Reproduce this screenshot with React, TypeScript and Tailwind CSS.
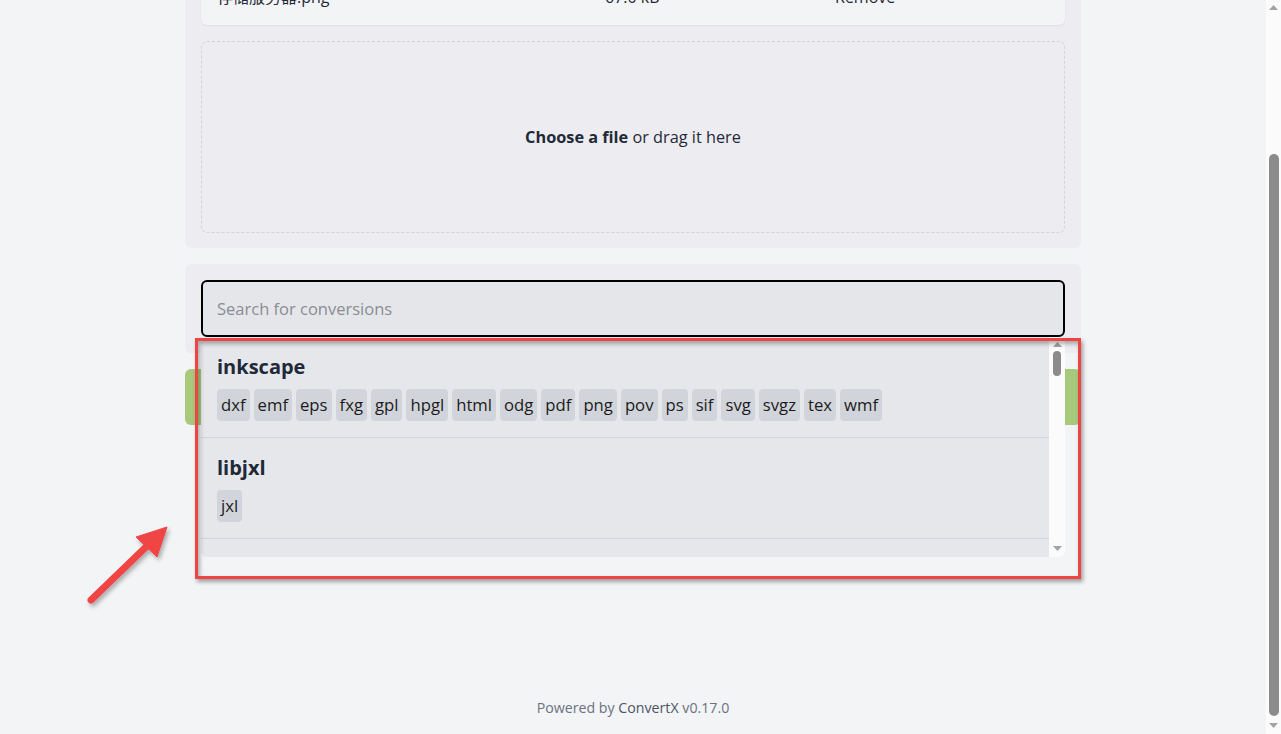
import React from 'react';

const converters = [
  {
    name: 'inkscape',
    targets: ['dxf', 'emf', 'eps', 'fxg', 'gpl', 'hpgl', 'html', 'odg', 'pdf', 'png', 'pov', 'ps', 'sif', 'svg', 'svgz', 'tex', 'wmf'],
  },
  { name: 'libjxl', targets: ['jxl'] },
  { name: 'libheif', targets: ['avif', 'heic', 'heif', 'jpg', 'png'] },
];

const FakeScrollbar: React.FC<{ className?: string; thumbClassName: string }> = ({ className, thumbClassName }) => (
  <div className={`flex flex-col items-center bg-[#fbfbfb] ${className ?? ''}`}>
    <svg width="9" height="5" viewBox="0 0 9 5" className="mt-[5px] shrink-0">
      <polygon points="0,5 4.5,0 9,5" fill="#a3a3a3" />
    </svg>
    <div className={`w-[8px] rounded-full bg-[#8b8b8b] ${thumbClassName}`} />
    <div className="flex-1" />
    <svg width="9" height="5" viewBox="0 0 9 5" className="mb-[6px] shrink-0">
      <polygon points="0,0 9,0 4.5,5" fill="#a3a3a3" />
    </svg>
  </div>
);

export default function App() {
  return (
    <div className="relative flex h-screen overflow-hidden bg-[#f3f4f6] font-['Open_Sans','Noto_Sans_CJK_SC',sans-serif] text-[#1f2937]">
      <div className="flex min-w-0 flex-1 flex-col">
        <main className="flex-1">
          <div className="mx-auto flex max-w-4xl flex-col gap-4">
            {/* upload card, scrolled partly out of view */}
            <section className="-mt-[47px] rounded-md bg-[#ededf1] px-4 pt-4 pb-[15px]">
              <div className="grid h-14 grid-cols-[388px_230px_1fr] items-center rounded-b-md bg-[#f3f4f6] pl-4 text-base shadow-[0_1px_2px_rgba(0,0,0,0.06)]">
                <span>存储服务器.png</span>
                <span>67.0 kB</span>
                <span>Remove</span>
              </div>
              <div className="mt-4 flex h-48 items-center justify-center rounded-md border border-dashed border-[#d4d4d8] text-[16.3px]">
                <span>
                  <b className="font-bold">Choose a file</b> or drag it here
                </span>
              </div>
            </section>

            {/* conversion picker */}
            <section className="rounded-md bg-[#ededf1] p-4">
              <div className="relative">
                <input
                  autoFocus
                  placeholder="Search for conversions"
                  className="h-[57px] w-full rounded-md border-2 border-black bg-[#e5e6ea] px-[14px] text-[16.5px] outline-none placeholder:text-[#8a8d93]"
                />
                <div className="absolute top-full left-0 z-10 flex h-[220px] w-full overflow-hidden rounded-md">
                  <div className="flex-1 overflow-hidden bg-[#e5e7eb]">
                    {converters.map(c => (
                      <div key={c.name} className="border-b border-[#d1d5db] p-4">
                        <h3 className="mb-2 text-xl leading-7 font-bold">{c.name}</h3>
                        <div className="flex flex-wrap gap-1">
                          {c.targets.map(t => (
                            <span key={t} className="rounded-[4px] bg-[#d1d5db] px-1 py-1 text-[16.7px] leading-6 text-[#1c1b1a]">
                              {t}
                            </span>
                          ))}
                        </div>
                      </div>
                    ))}
                  </div>
                  <FakeScrollbar className="w-4" thumbClassName="mt-[4px] h-[25px]" />
                </div>
              </div>
            </section>

            <button className="h-14 w-full rounded-md bg-[#a6c97c] text-lg font-semibold text-[#1f2937]">
              Convert
            </button>
          </div>
        </main>

        <footer className="p-4 text-center text-[14.2px] leading-5 text-[#6b7280]">
          Powered by <span className="text-[#4b5563]">ConvertX</span> v0.17.0
        </footer>
      </div>

      {/* window scrollbar */}
      <FakeScrollbar className="w-[15px] shrink-0" thumbClassName="mt-[144px] h-[562px] w-[10px]" />

      {/* annotation overlay */}
      <div className="pointer-events-none absolute top-[338px] left-[195px] z-20 h-[241px] w-[886px] border-[3px] border-[#ef4444] shadow-[2px_3px_4px_rgba(0,0,0,0.35),inset_2px_3px_4px_rgba(0,0,0,0.3)]" />
      <svg
        className="pointer-events-none absolute top-[520px] left-[80px] z-20"
        width="100"
        height="95"
        viewBox="80 520 100 95"
      >
        <defs>
          <filter id="sh" x="-20%" y="-20%" width="140%" height="140%">
            <feDropShadow dx="2" dy="3" stdDeviation="2" floodColor="#000" floodOpacity="0.3" />
          </filter>
        </defs>
        <g filter="url(#sh)" fill="#ef4444" stroke="#ef4444">
          <line x1="91" y1="600" x2="147" y2="546" strokeWidth="7" strokeLinecap="round" />
          <polygon points="167,527 136,537 157,557" strokeWidth="1" strokeLinejoin="round" />
        </g>
      </svg>
    </div>
  );
}
